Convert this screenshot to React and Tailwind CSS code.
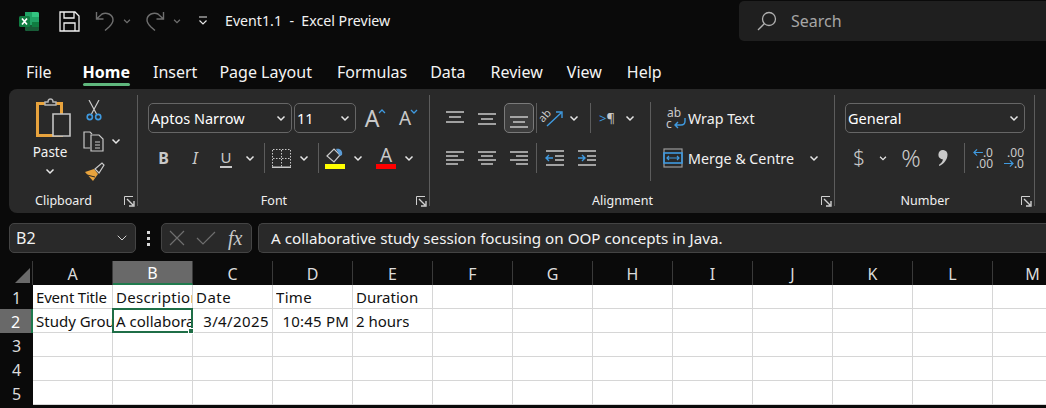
import { ChevronDown } from "lucide-react";

const uiFont = "font-['Noto_Sans',sans-serif]";

const Chev = ({ size = 12, className = "text-[#e6e6e6]" }) => (
  <svg width={size} height={size} viewBox="0 0 12 12" className={className} fill="none" stroke="currentColor" strokeWidth="1.5">
    <path d="M2.5 4.5 6 8l3.5-3.5" />
  </svg>
);

const Slot = ({ className = "", children }) => (
  <div className={`flex h-full shrink-0 items-center justify-center ${className}`}>{children}</div>
);

const VLine = ({ className = "h-[30px]" }) => <div className={`w-px shrink-0 bg-[#5c5c5c] ${className}`} />;

const Launcher = () => (
  <svg width="11" height="11" viewBox="0 0 11 11" fill="none" className="text-[#d0d0d0]" stroke="currentColor">
    <path d="M.5 9V.5H9" />
    <path d="M3 3l6 6M10 5v5H5" strokeWidth="1.4" />
  </svg>
);

const Lines = ({ rows }) => (
  <svg width="20" height="20" viewBox="0 0 20 20" stroke="#c9c9c9" strokeWidth="1.4">
    {rows.map(([x1, x2, y]) => (
      <path key={y} d={`M${x1} ${y}H${x2}`} />
    ))}
  </svg>
);

const Group = ({ label, launcher, className, children }) => (
  <div className={`relative flex h-full shrink-0 flex-col ${className}`}>
    <div className="h-[99px] pt-[14px]">{children}</div>
    <div className="flex h-[24px] items-center justify-center pt-[2px] pr-[20px] text-[12.5px] text-[#f0f0f0]">{label}</div>
    {launcher && (
      <div className="absolute right-[3px] bottom-[6px]">
        <Launcher />
      </div>
    )}
    <div className="absolute top-[6px] right-0 bottom-[7px] w-px bg-[#5c5c5c]" />
  </div>
);

const Select = ({ value, className }) => (
  <div className={`flex h-[30px] shrink-0 items-center justify-between rounded-[5px] border border-[#666] pr-[4px] pl-[2px] text-[14.5px] text-white ${className}`}>
    <span className="translate-y-px">{value}</span>
    <Chev />
  </div>
);

const ExcelLogo = () => (
  <svg width="21" height="21" viewBox="0 0 21 21">
    <path d="M6 1h12a2 2 0 0 1 2 2v15a2 2 0 0 1-2 2H8a2 2 0 0 1-2-2z" fill="#21a366" />
    <path d="M13 1h5a2 2 0 0 1 2 2v3h-7z" fill="#33c481" />
    <path d="M6 14h14v4a2 2 0 0 1-2 2H8a2 2 0 0 1-2-2z" fill="#185c37" />
    <path d="M13 11h7v5h-7z" fill="#107c41" />
    <rect x="0" y="5" width="11" height="11" rx="1.5" fill="#107c41" />
    <path d="M3 7.5 8 13.5M8 7.5 3 13.5" stroke="#fff" strokeWidth="1.7" />
  </svg>
);

const TitleBar = () => (
  <div className="flex h-[56px] shrink-0 items-start">
    <div className="flex h-[42px] w-[739px] shrink-0 items-center pl-[19px]">
      <ExcelLogo />
      <Slot className="ml-[19px] w-[21px]">
        <svg width="21" height="21" viewBox="0 0 21 21" fill="none" stroke="#f2f2f2" strokeWidth="1.3">
          <path d="M1 1h15l4 4v15H1z" />
          <path d="M5 1v6h10V1M5 20v-8h11v8" />
        </svg>
      </Slot>
      <Slot className="ml-[15px] w-[20px]">
        <svg width="20" height="20" viewBox="0 0 20 20" fill="none" stroke="#6f6f6f" strokeWidth="1.4">
          <path d="M1.5 1v7h7M1.5 8 7 3c4-2 11 0 11 6 0 3-2 5-4 7l-4 3.5" />
        </svg>
      </Slot>
      <Slot className="ml-[6px] w-[12px]">
        <Chev size={10} className="text-[#6f6f6f]" />
      </Slot>
      <Slot className="ml-[12px] w-[20px]">
        <svg width="20" height="20" viewBox="0 0 20 20" fill="none" stroke="#6f6f6f" strokeWidth="1.4">
          <path d="M18.5 1v7h-7M18.5 8 13 3C9 1 2 3 2 9c0 3 2 5 4 7l4 3.5" />
        </svg>
      </Slot>
      <Slot className="ml-[6px] w-[12px]">
        <Chev size={10} className="text-[#6f6f6f]" />
      </Slot>
      <Slot className="ml-[14px] w-[12px]">
        <svg width="12" height="12" viewBox="0 0 12 12" fill="none" stroke="#e6e6e6" strokeWidth="1.2">
          <path d="M2 2h8M2.5 5.5 6 9l3.5-3.5" />
        </svg>
      </Slot>
      <span className="ml-[16px] whitespace-pre text-[14.2px] text-[#f2f2f2]">Event1.1  -  Excel Preview</span>
    </div>
    <div className="mt-px flex h-[40px] flex-1 items-center rounded-l-[5px] bg-[#1f1f1f] pl-[18px] text-[#a6a6a6]">
      <svg width="20" height="20" viewBox="0 0 20 20" fill="none" stroke="#b0b0b0" strokeWidth="1.3">
        <circle cx="12" cy="8" r="6.5" />
        <path d="M7.5 12.5 1 19" />
      </svg>
      <span className="ml-[14px] text-[16px]">Search</span>
    </div>
  </div>
);

const tabs = [
  ["File", "ml-[26px]"],
  ["Home", "ml-[31px]"],
  ["Insert", "ml-[23px]"],
  ["Page Layout", "ml-[22px]"],
  ["Formulas", "ml-[25px]"],
  ["Data", "ml-[23px]"],
  ["Review", "ml-[25px]"],
  ["View", "ml-[24px]"],
  ["Help", "ml-[25px]"],
];

const Tabs = () => (
  <div className="flex h-[33px] shrink-0 items-center pb-[2px] text-[16px] text-[#f4f4f4]">
    {tabs.map(([name, cls]) => (
      <div key={name} className={`relative ${cls} ${name === "Home" ? "font-bold text-white" : ""}`}>
        {name}
        {name === "Home" && <div className="absolute right-0 -bottom-[2px] left-0 h-[2.5px] rounded-full bg-[#5fb77d]" />}
      </div>
    ))}
  </div>
);

const Clipboard = () => (
  <Group label="Clipboard" launcher className="w-[129px]">
    <div className="-mt-[5px] flex">
      <div className="ml-[27px] flex w-[34px] flex-col items-center">
        <svg width="35" height="40" viewBox="0 0 35 40" fill="none">
          <path d="M1.5 5.5h24v32h-24z" stroke="#e8a33d" strokeWidth="3" />
          <path d="M9 7V4h3c0-4 5-4 5 0h3v3z" fill="#292929" stroke="#b5b5b5" strokeWidth="1.4" />
          <path d="M17 16h17v22H17z" fill="#292929" stroke="#c4c4c4" strokeWidth="1.6" />
        </svg>
        <span className="mt-[4px] -ml-[6px] text-[13.5px] leading-[20px] text-[#f2f2f2]">Paste</span>
        <div className="mt-[3px] -ml-[7px]">
          <Chev />
        </div>
      </div>
      <div className="ml-[13px] flex flex-col">
        <div className="flex h-[24px] w-[22px] items-center justify-center">
          <svg width="16" height="21" viewBox="0 0 16 21" fill="none">
            <path d="M3 0l7.5 14M13 0 5.5 14" stroke="#c9c9c9" strokeWidth="1.2" />
            <circle cx="3.8" cy="17" r="2.6" stroke="#3f9ae0" strokeWidth="1.6" />
            <circle cx="12.2" cy="17" r="2.6" stroke="#3f9ae0" strokeWidth="1.6" />
          </svg>
        </div>
        <div className="mt-[8px] flex h-[22px] items-center">
          <svg width="21" height="21" viewBox="0 0 21 21" fill="none" stroke="#c9c9c9" strokeWidth="1.2">
            <path d="M7 17H1V1h6l2 2" />
            <path d="M8 4h8l4 4v12H8z" />
            <path d="M12 11h5M12 14h5M12 17h5" />
          </svg>
          <span className="ml-[6px]">
            <Chev />
          </span>
        </div>
        <div className="mt-[9px] flex h-[22px] w-[22px] items-center justify-center">
          <svg width="21" height="20" viewBox="0 0 21 20" fill="none">
            <path d="M1 10l9-3 4 5-5 7z" fill="#e8a33d" />
            <path d="M3 13l8 2" stroke="#292929" />
            <path d="M11 7l7-6 2 2-5 8z" stroke="#c9c9c9" strokeWidth="1.2" />
          </svg>
        </div>
      </div>
    </div>
  </Group>
);

const Font = () => (
  <Group label="Font" launcher className="w-[292px]">
    <div className="flex h-[30px] items-center pl-[10px]">
      <Select value="Aptos Narrow" className="w-[144px]" />
      <Select value="11" className="ml-[2px] w-[62px]" />
      <Slot className="ml-[4px] w-[24px]">
        <span className="relative text-[23px] leading-none text-[#c9c9c9]">
          A
          <svg width="8" height="5" viewBox="0 0 8 5" fill="none" stroke="#3f9ae0" strokeWidth="1.3" className="absolute top-[2px] -right-[7px]">
            <path d="M1 4l3-3 3 3" />
          </svg>
        </span>
      </Slot>
      <Slot className="ml-[11px] w-[20px]">
        <span className="relative text-[19px] leading-none text-[#c9c9c9]">
          A
          <svg width="8" height="5" viewBox="0 0 8 5" fill="none" stroke="#3f9ae0" strokeWidth="1.3" className="absolute top-0 -right-[7px]">
            <path d="M1 1l3 3 3-3" />
          </svg>
        </span>
      </Slot>
    </div>
    <div className="mt-[10px] flex h-[30px] items-center pl-[10px]">
      <Slot className="w-[31px] text-[16px] font-bold text-[#c9c9c9]">B</Slot>
      <Slot className="w-[32px] text-[16px] italic text-[#c9c9c9]">I</Slot>
      <Slot className="w-[30px]">
        <span className="border-b-2 border-[#c9c9c9] px-[1px] text-[15px] leading-[17px] text-[#c9c9c9]">U</span>
      </Slot>
      <Slot className="w-[18px]">
        <Chev />
      </Slot>
      <Slot className="w-[5px]" />
      <VLine />
      <Slot className="w-[32px]">
        <svg width="19" height="19" viewBox="0 0 19 19" fill="none" stroke="#c9c9c9">
          <path d="M1 .5h17M1 9.5h17M.5 1v17M18.5 1v17M9.5 1v17" strokeDasharray="1.5 1.5" />
          <path d="M0 18.3h19" strokeWidth="1.4" />
        </svg>
      </Slot>
      <Slot className="w-[14px]">
        <Chev />
      </Slot>
      <Slot className="w-[7px]" />
      <VLine />
      <Slot className="w-[32px]">
        <div className="flex flex-col items-center">
          <svg width="18" height="15" viewBox="0 0 18 15" fill="none">
            <path d="M1 8l7-7 6 6-6 7z" stroke="#c9c9c9" strokeWidth="1.2" />
            <path d="M10 1c4-1 7 2 6 6l-2 1z" fill="#5a9bd5" />
          </svg>
          <div className="mt-[1px] h-[5px] w-[20px] bg-[#ffff00]" />
        </div>
      </Slot>
      <Slot className="w-[14px]">
        <Chev />
      </Slot>
      <Slot className="w-[7px]" />
      <Slot className="w-[28px]">
        <div className="flex flex-col items-center">
          <span className="text-[19px] leading-[16px] text-[#c9c9c9]">A</span>
          <div className="mt-[1px] h-[5px] w-[20px] bg-[#ff0000]" />
        </div>
      </Slot>
      <Slot className="w-[18px]">
        <Chev />
      </Slot>
    </div>
  </Group>
);

const Alignment = () => (
  <Group label="Alignment" className="w-[405px]">
    <div className="flex">
      <div className="w-[220px] pl-[10px]">
        <div className="flex h-[30px] items-center">
          <Slot className="w-[30px]">
            <Lines rows={[[1, 19, 4], [4, 16, 9], [1, 19, 14]]} />
          </Slot>
          <Slot className="ml-[2px] w-[30px]">
            <Lines rows={[[1, 19, 6], [4, 16, 11], [1, 19, 16]]} />
          </Slot>
          <Slot className="ml-[2px] w-[30px] rounded-[5px] border border-[#7a7a7a] bg-[#3d3d3d]">
            <Lines rows={[[1, 19, 9], [4, 16, 14], [1, 19, 19]]} />
          </Slot>
          <Slot className="ml-[2px] w-px">
            <VLine />
          </Slot>
          <Slot className="ml-[3px] w-[24px]">
            <svg width="22" height="20" viewBox="0 0 22 20" fill="none" className="overflow-visible">
              <path d="M6 18 20 5M15 4h6v6" stroke="#3f9ae0" strokeWidth="1.4" />
              <text x="2" y="15" fill="#c9c9c9" fontSize="11" fontFamily="Noto Sans" transform="rotate(-48 2 15)">ab</text>
            </svg>
          </Slot>
          <Slot className="w-[20px]">
            <Chev />
          </Slot>
          <Slot className="ml-[6px] w-px">
            <VLine />
          </Slot>
          <Slot className="ml-[6px] w-[20px]">
            <span className="flex items-center text-[13px] leading-none text-[#c9c9c9]">
              <span className="text-[#3f9ae0]">&gt;</span>¶
            </span>
          </Slot>
          <Slot className="ml-[3px] w-[20px]">
            <Chev />
          </Slot>
        </div>
        <div className="mt-[10px] flex h-[30px] items-center">
          <Slot className="w-[30px]">
            <Lines rows={[[1, 19, 4], [1, 13, 8], [1, 19, 12], [1, 13, 16]]} />
          </Slot>
          <Slot className="ml-[2px] w-[30px]">
            <Lines rows={[[1, 19, 4], [4, 16, 8], [1, 19, 12], [4, 16, 16]]} />
          </Slot>
          <Slot className="ml-[2px] w-[30px]">
            <Lines rows={[[1, 19, 4], [7, 19, 8], [1, 19, 12], [7, 19, 16]]} />
          </Slot>
          <Slot className="ml-[2px] w-px">
            <VLine />
          </Slot>
          <Slot className="ml-[2px] w-[32px]">
            <svg width="20" height="20" viewBox="0 0 20 20" fill="none">
              <path d="M1 3h18M10 8h9M10 12h9M1 17h18" stroke="#c9c9c9" strokeWidth="1.4" />
              <path d="M8 10H1M4 7l-3 3 3 3" stroke="#3f9ae0" strokeWidth="1.4" />
            </svg>
          </Slot>
          <Slot className="w-[32px]">
            <svg width="20" height="20" viewBox="0 0 20 20" fill="none">
              <path d="M1 3h18M10 8h9M10 12h9M1 17h18" stroke="#c9c9c9" strokeWidth="1.4" />
              <path d="M1 10h7M5 7l3 3-3 3" stroke="#3f9ae0" strokeWidth="1.4" />
            </svg>
          </Slot>
        </div>
      </div>
      <VLine className="-mt-px h-[79px]" />
      <div className="pl-[14px]">
        <div className="flex h-[30px] items-center text-[14.25px] text-[#f2f2f2]">
          <svg width="22" height="22" viewBox="0 0 22 22" fill="none" className="overflow-visible">
            <text x="2" y="10" fill="#c9c9c9" fontSize="12" fontFamily="Noto Sans">ab</text>
            <text x="1" y="21" fill="#c9c9c9" fontSize="12" fontFamily="Noto Sans">c</text>
            <path d="M20 11v3c0 3-2 4-4 4h-6M13 15l-3 3 3 3" stroke="#3f9ae0" strokeWidth="1.4" />
          </svg>
          <span className="ml-[1px] translate-y-px">Wrap Text</span>
        </div>
        <div className="mt-[10px] flex h-[30px] items-center text-[14.25px] text-[#f2f2f2]">
          <svg width="20" height="20" viewBox="0 0 20 20" fill="none" className="-ml-[2px]">
            <rect x="1" y="1" width="18" height="18" stroke="#9a9a9a" strokeWidth="1.2" />
            <rect x="1" y="5" width="18" height="10" stroke="#3f9ae0" strokeWidth="1.6" />
            <path d="M4 10h12M6 8l-2 2 2 2M14 8l2 2-2 2" stroke="#3f9ae0" strokeWidth="1.2" />
          </svg>
          <span className="ml-[5px] translate-y-px">Merge &amp; Centre</span>
          <span className="ml-[14px]">
            <Chev />
          </span>
        </div>
      </div>
    </div>
    <div className="absolute right-[3px] bottom-[6px]">
      <Launcher />
    </div>
  </Group>
);

const Number = () => (
  <Group label="Number" launcher className="w-[200px]">
    <div className="flex h-[30px] items-center pl-[10px]">
      <Select value="General" className="w-[180px]" />
    </div>
    <div className="mt-[10px] flex h-[30px] items-center pl-[10px]">
      <Slot className="w-[28px] text-[21px] font-light text-[#c9c9c9]">$</Slot>
      <Slot className="w-[20px]">
        <Chev size={10} />
      </Slot>
      <Slot className="ml-[2px] w-[32px] text-[24px] font-light text-[#c9c9c9]">%</Slot>
      <Slot className="w-[32px]">
        <svg width="10" height="16" viewBox="0 0 10 16" fill="#c9c9c9">
          <path d="M4.8 0a4.5 4.5 0 0 1 4.7 4.8C9.5 9.5 6 14 1.5 16L.8 15C3 13.5 4.6 11.5 5 9.5a4.6 4.6 0 0 1-4.6-4.7C.4 2 2.4 0 4.8 0z" />
        </svg>
      </Slot>
      <Slot className="ml-[5px] w-px">
        <VLine />
      </Slot>
      <Slot className="w-[36px]">
        <div className="flex w-[20px] flex-col text-[12px] leading-[11px] text-[#c9c9c9]">
          <div className="flex items-center justify-between">
            <svg width="11" height="9" viewBox="0 0 11 9" fill="none" stroke="#3f9ae0" strokeWidth="1.3">
              <path d="M11 4.5H1M4.5 1 1 4.5 4.5 8" />
            </svg>
            <span>.0</span>
          </div>
          <div className="text-right">.00</div>
        </div>
      </Slot>
      <Slot className="w-[26px]">
        <div className="flex w-[20px] flex-col text-[12px] leading-[11px] text-[#c9c9c9]">
          <div className="text-right">.00</div>
          <div className="flex items-center justify-between">
            <svg width="11" height="9" viewBox="0 0 11 9" fill="none" stroke="#3f9ae0" strokeWidth="1.3">
              <path d="M0 4.5h10M6.5 1 10 4.5 6.5 8" />
            </svg>
            <span>.0</span>
          </div>
        </div>
      </Slot>
    </div>
  </Group>
);

const Ribbon = () => (
  <div className="ml-[9px] flex h-[124px] shrink-0 overflow-hidden rounded-l-[8px] bg-[#292929]">
    <Clipboard />
    <Font />
    <Alignment />
    <Number />
  </div>
);

const FormulaBar = () => (
  <div className="mt-[10px] flex h-[30px] shrink-0 items-center text-[15.2px] text-[#f2f2f2]">
    <div className="ml-[9px] flex h-full w-[127px] items-center justify-between rounded-[5px] border border-[#444] bg-[#292929] pr-[5px] pl-[6px]">
      <span className="text-[16px]">B2</span>
      <ChevronDown size={16} strokeWidth={1.5} className="text-[#d0d0d0]" />
    </div>
    <div className="ml-[11px] flex w-[4px] flex-col gap-[3px]">
      <div className="h-[3px] w-[3px] bg-[#d8d8d8]" />
      <div className="h-[3px] w-[3px] bg-[#d8d8d8]" />
      <div className="h-[3px] w-[3px] bg-[#d8d8d8]" />
    </div>
    <div className="ml-[10px] flex h-full w-[91px] items-center rounded-[5px] border border-[#444] bg-[#292929] pl-[7px]">
      <svg width="16" height="16" viewBox="0 0 16 16" stroke="#6f6f6f" strokeWidth="1.2">
        <path d="M1 1l14 14M15 1 1 15" />
      </svg>
      <svg width="20" height="14" viewBox="0 0 20 14" fill="none" stroke="#6f6f6f" strokeWidth="1.2" className="ml-[11px]">
        <path d="M1 7l6 6L19 1" />
      </svg>
      <span className="ml-[12px] font-['Liberation_Serif',serif] text-[20px] italic text-[#c9c9c9]">fx</span>
    </div>
    <div className="ml-[6px] flex h-full flex-1 items-center rounded-l-[5px] border border-r-0 border-[#444] bg-[#292929] pl-[12px]">
      A collaborative study session focusing on OOP concepts in Java.
    </div>
  </div>
);

const cols = ["A", "B", "C", "D", "E", "F", "G", "H", "I", "J", "K", "L", "M"];

// sizes stay at 15px, tracking makes up for Aptos Narrow's different widths
const cells = {
  1: {
    A: { t: "Event Title", cls: "tracking-[-0.2px]" },
    B: { t: "Description", cls: "tracking-[0.3px]" },
    C: { t: "Date", cls: "tracking-[0.5px]" },
    D: { t: "Time", cls: "tracking-[0.3px]" },
    E: { t: "Duration" },
  },
  2: {
    A: { t: "Study Group" },
    B: { t: "A collaborative" },
    C: { t: "3/4/2025", right: true, cls: "tracking-[0.4px]" },
    D: { t: "10:45 PM", right: true, cls: "tracking-[0.2px]" },
    E: { t: "2 hours" },
  },
};

const Sheet = () => (
  <div className="mt-[8px] flex-1 overflow-hidden">
    <div className="flex h-[24px] items-stretch">
      <div className="flex h-full w-[33px] shrink-0 items-end justify-end border-r border-[#3a3a3a] pr-[2px] pb-[2px]">
        <div className="h-0 w-0 border-b-[15px] border-l-[15px] border-b-[#6a6a6a] border-l-transparent" />
      </div>
      {cols.map((c) => (
        <div
          key={c}
          className={`flex w-[80px] shrink-0 items-center justify-center border-r border-[#3a3a3a] pt-px text-[16px] ${c === "B" ? "border-b-2 border-b-[#1f7a4d] bg-[#696969] text-white" : "text-[#dcdcdc]"}`}
        >
          {c}
        </div>
      ))}
    </div>
    {[1, 2, 3, 4, 5].map((r) => (
      <div key={r} className="flex h-[24px]">
        <div
          className={`flex w-[33px] shrink-0 items-center justify-center pt-px text-[16px] ${r === 2 ? "border-r-2 border-r-[#1f7a4d] bg-[#696969] text-white" : "text-[#dcdcdc]"}`}
        >
          {r}
        </div>
        {cols.map((c) => {
          const cell = cells[r]?.[c];
          const active = r === 2 && c === "B";
          return (
            <div
              key={c}
              className={`relative flex w-[80px] shrink-0 items-center border-r border-b border-[#d6d6d6] bg-white pt-px text-[15px] text-[#111] ${cell?.right ? "justify-end pr-[3px]" : "pl-[3px]"}`}
            >
              {cell && <span className={`block overflow-hidden whitespace-nowrap ${cell.cls || ""}`}>{cell.t}</span>}
              {active && (
                <div className="absolute -top-px -right-px -bottom-px -left-[1px] z-10 border-2 border-[#1f6e47]">
                  <div className="absolute -right-[3px] -bottom-[3px] h-[6px] w-[6px] border border-white bg-[#1f6e47]" />
                </div>
              )}
            </div>
          );
        })}
      </div>
    ))}
  </div>
);

export default function App() {
  return (
    <div className={`flex h-[408px] w-[1046px] flex-col overflow-hidden bg-[#0a0a0a] ${uiFont}`}>
      <TitleBar />
      <Tabs />
      <Ribbon />
      <FormulaBar />
      <Sheet />
    </div>
  );
}
